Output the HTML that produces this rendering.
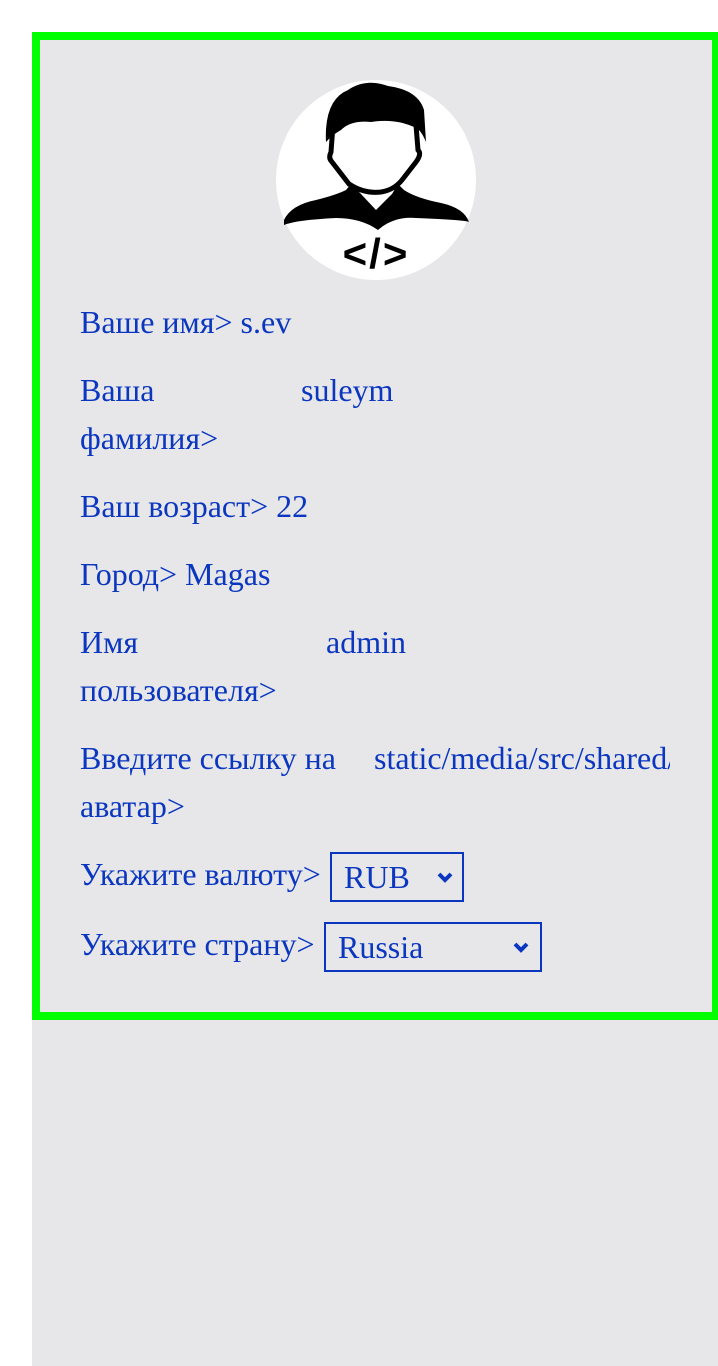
<!DOCTYPE html>
<html><head><meta charset="utf-8"><style>
html,body{margin:0;padding:0;background:#fff;width:718px;height:1366px;overflow:hidden;position:relative}
.bg{position:absolute;left:32px;top:32px;width:686px;height:1334px;background:#e7e7ea}
.box{position:absolute;left:32px;top:32px;width:686px;height:988px;box-sizing:border-box;border:8px solid #00ff00;border-right-width:6px}
.t{position:absolute;font-family:"Liberation Serif","Noto Serif CJK SC",serif;font-size:32px;color:#0a36c0;white-space:nowrap;line-height:36px}
.sel{position:absolute;box-sizing:border-box;border:2px solid #0a36c0;height:50px}
.sel .t{top:5px;left:12px}
.chev{position:absolute;top:17px;width:18px;height:13px}
</style></head><body>
<div class="bg"></div>
<div class="box"></div>
<svg style="position:absolute;left:276px;top:80px" width="200" height="200" viewBox="0 0 200 200">
<circle cx="100" cy="100" r="100" fill="#fff"/>
<path d="M50 62 Q48 20 72 10 Q90 -2 112 6 Q142 10 148 30 L150 62 Q145 50 140 48 Q120 38 95 42 Q75 40 65 50 Q56 55 50 62 Z" fill="#000"/>
<path d="M57 45 L55 72 Q52 78 56 82 L73 104 Q88 114 105 112 Q118 110 126 100 L140 82 Q146 74 142 70 L140 45" fill="none" stroke="#000" stroke-width="5"/>
<path d="M8 140 Q15 125 40 120 Q60 115 70 110 L75 104 L85 114 L100 130 L116 114 L122 104 L128 110 Q140 118 165 123 Q188 128 193 142 Q190 140 140 138 Q118 136 102 150 Q85 138 60 138 Q20 140 8 145 Z" fill="#000"/>
<text x="100" y="188" text-anchor="middle" font-family="Liberation Sans,sans-serif" font-weight="bold" font-size="42" fill="#000" letter-spacing="2">&lt;/&gt;</text>
</svg>
<div class="t" style="left:80px;top:304px">Ваше имя&gt; s.ev</div>
<div class="t" style="left:80px;top:372px">Ваша</div>
<div class="t" style="left:301px;top:372px">suleym</div>
<div class="t" style="left:80px;top:420px">фамилия&gt;</div>
<div class="t" style="left:80px;top:488px">Ваш возраст&gt; 22</div>
<div class="t" style="left:80px;top:556px">Город&gt; Magas</div>
<div class="t" style="left:80px;top:624px">Имя</div>
<div class="t" style="left:326px;top:624px">admin</div>
<div class="t" style="left:80px;top:672px">пользователя&gt;</div>
<div class="t" style="left:80px;top:740px">Введите ссылку на</div>
<div style="position:absolute;left:374px;top:740px;width:296px;height:40px;overflow:hidden"><div class="t" style="left:0;top:0">static/media/src/shared/avatar.png</div></div>
<div class="t" style="left:80px;top:788px">аватар&gt;</div>
<div class="t" style="left:80px;top:856px">Укажите валюту&gt;</div>
<div class="sel" style="left:330px;top:852px;width:134px"><div class="t">RUB</div>
<svg class="chev" style="left:104px" viewBox="0 0 18 13"><path d="M3 3 L9 9 L15 3" fill="none" stroke="#0a36c0" stroke-width="4"/></svg></div>
<div class="t" style="left:80px;top:926px">Укажите страну&gt;</div>
<div class="sel" style="left:324px;top:922px;width:218px"><div class="t">Russia</div>
<svg class="chev" style="left:186px" viewBox="0 0 18 13"><path d="M3 3 L9 9 L15 3" fill="none" stroke="#0a36c0" stroke-width="4"/></svg></div>
</body></html>
